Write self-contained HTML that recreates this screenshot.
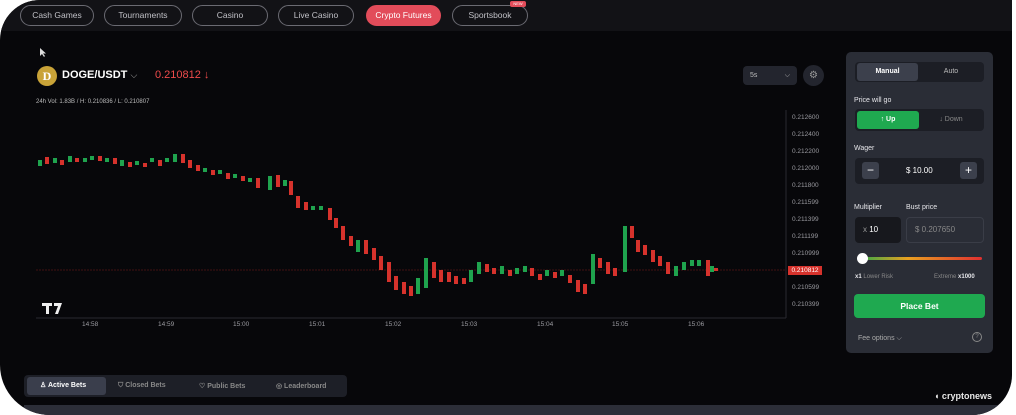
<!DOCTYPE html>
<html><head><meta charset="utf-8"><style>
*{margin:0;padding:0;box-sizing:border-box}
body{width:1016px;height:415px;background:#fff;overflow:hidden;font-family:"Liberation Sans",sans-serif;position:relative}
.frame{position:absolute;left:0;top:0;width:1012px;height:415px;background:#07070a;border-radius:40px 0 40px 50px;overflow:hidden}
.top{position:absolute;left:0;top:0;width:1016px;height:31px;background:#121216}
.tab{position:absolute;top:5px;height:21px;border:1px solid #6a6a72;border-radius:11px;color:#c0c0c6;font-size:8.5px;line-height:19px;text-align:center}
.panel{position:absolute;left:846px;top:52px;width:147px;height:301px;background:#2a2d36;border-radius:5px}
.t{position:absolute;color:#e6e6ea;font-size:7px}
.ax{position:absolute;left:792px;color:#9a9aa0;font-size:6.5px}
.tm{position:absolute;top:321px;color:#9a9aa0;font-size:6.5px}
</style></head><body>
<div class="frame">
<div class="top"></div>
<div class="tab" style="left:20px;width:74px">Cash Games</div>
<div class="tab" style="left:104px;width:78px">Tournaments</div>
<div class="tab" style="left:192px;width:76px">Casino</div>
<div class="tab" style="left:278px;width:76px">Live Casino</div>
<div class="tab" style="left:366px;width:75px;background:#e24c5a;border-color:#e24c5a;color:#fff">Crypto Futures</div>
<div class="tab" style="left:452px;width:76px">Sportsbook</div>
<div style="position:absolute;left:510px;top:1px;width:16px;height:6px;background:#e24c5a;border-radius:2px;color:#fff;font-size:4px;text-align:center;line-height:6px">NEW</div>
<svg style="position:absolute;left:40px;top:48px" width="8" height="10"><path d="M0 0v8l2-2 2 3 1-1-2-2.5h3z" fill="#ddd"/></svg>
<div style="position:absolute;left:37px;top:66px;width:20px;height:20px;border-radius:50%;background:#c9a338;color:#fff;font:bold 12px 'Liberation Serif',serif;text-align:center;line-height:20px">D</div>
<div style="position:absolute;left:62px;top:69px;color:#fff;font-size:11px;font-weight:bold">DOGE/USDT <span style="font-weight:normal;color:#aaa;font-size:9px">⌵</span></div>
<div style="position:absolute;left:155px;top:69px;color:#ef4b4b;font-size:11px">0.210812 ↓</div>
<div style="position:absolute;left:36px;top:99px;color:#bbb;font-size:6px">24h Vol: 1.83B / H: 0.210836 / L: 0.210807</div>
<div style="position:absolute;left:743px;top:66px;width:54px;height:19px;background:#23252e;border-radius:4px;color:#bbb;font-size:7px;line-height:19px;padding-left:7px">5s<span style="position:absolute;right:7px">⌵</span></div>
<div style="position:absolute;left:803px;top:65px;width:21px;height:21px;background:#23252e;border-radius:50%;color:#999;font-size:10px;text-align:center;line-height:21px">⚙</div>
<svg style="position:absolute;left:0;top:0" width="1016" height="415">
<line x1="786" y1="110" x2="786" y2="318" stroke="#2a2a30"/>
<line x1="36" y1="318" x2="786" y2="318" stroke="#2a2a30"/>
<line x1="36" y1="270" x2="786" y2="270" stroke="#7a1a1a" stroke-dasharray="2 1" stroke-width=".6"/>
<path stroke="#d6322c" stroke-width="4" fill="none" d="M47 157v7 M62 160v5 M77 158v4 M100 156v5 M115 158v6 M130 162v5 M145 163v4 M160 160v6 M183 154v9 M190 160v8 M198 165v6 M213 170v5 M228 173v6 M243 176v5 M258 178v10 M278 175v12 M291 181v14 M298 196v12 M306 202v8 M330 208v12 M336 218v10 M343 226v14 M351 236v10 M366 240v14 M374 248v12 M381 256v14 M389 262v20 M396 276v14 M404 282v12 M411 286v10 M434 262v16 M441 270v12 M449 272v10 M456 276v8 M464 278v6 M487 264v8 M494 268v6 M510 270v6 M532 268v8 M540 274v6 M555 272v6 M570 275v8 M578 280v12 M585 284v10 M600 258v10 M608 262v12 M615 268v8 M632 226v12 M638 240v12 M645 245v10 M653 250v12 M660 256v10 M668 262v12 M708 260v16 M716 268v3"/>
<path stroke="#1fa34e" stroke-width="4" fill="none" d="M40 160v6 M55 158v5 M70 156v6 M85 158v4 M92 156v4 M107 158v4 M122 160v6 M137 161v4 M152 158v4 M167 158v4 M175 154v8 M205 168v4 M220 170v4 M235 174v4 M250 178v4 M270 176v14 M285 180v6 M313 206v4 M321 206v4 M358 240v12 M418 278v16 M426 258v30 M471 270v12 M479 262v12 M502 266v8 M517 268v6 M525 266v6 M547 270v6 M562 270v6 M593 254v30 M625 226v46 M676 266v10 M684 262v8 M692 260v6 M699 260v6 M712 266v6"/>
<path d="M42 303h10v3h-3v8h-3v-8h-4zM54 303h8l-4 11h-3l3-8h-4z" fill="#eee"/>
</svg>
<div class="ax" style="top:114px">0.212600</div><div class="ax" style="top:131px">0.212400</div><div class="ax" style="top:148px">0.212200</div><div class="ax" style="top:165px">0.212000</div><div class="ax" style="top:182px">0.211800</div><div class="ax" style="top:199px">0.211599</div><div class="ax" style="top:216px">0.211399</div><div class="ax" style="top:233px">0.211199</div><div class="ax" style="top:250px">0.210999</div>
<div style="position:absolute;left:788px;top:266px;width:34px;height:9px;background:#d6322c;color:#fff;font-size:6.5px;line-height:9px;text-align:center">0.210812</div>
<div class="ax" style="top:284px">0.210599</div><div class="ax" style="top:301px">0.210399</div>
<div class="tm" style="left:82px">14:58</div><div class="tm" style="left:158px">14:59</div><div class="tm" style="left:233px">15:00</div><div class="tm" style="left:309px">15:01</div><div class="tm" style="left:385px">15:02</div><div class="tm" style="left:461px">15:03</div><div class="tm" style="left:537px">15:04</div><div class="tm" style="left:612px">15:05</div><div class="tm" style="left:688px">15:06</div>
<div class="panel"></div>
<div style="position:absolute;left:855px;top:62px;width:129px;height:20px;background:#1c1e25;border-radius:4px"></div>
<div style="position:absolute;left:857px;top:63px;width:61px;height:18px;background:#3c404c;border-radius:3px;color:#fff;font-size:7px;font-weight:bold;text-align:center;line-height:18px">Manual</div>
<div style="position:absolute;left:920px;top:63px;width:62px;height:18px;color:#bbb;font-size:7px;text-align:center;line-height:18px">Auto</div>
<div class="t" style="left:854px;top:97px">Price will go</div>
<div style="position:absolute;left:855px;top:109px;width:129px;height:22px;background:#1c1e25;border-radius:4px"></div>
<div style="position:absolute;left:857px;top:111px;width:62px;height:18px;background:#1fa950;border-radius:3px;color:#fff;font-size:7px;font-weight:bold;text-align:center;line-height:18px">↑ Up</div>
<div style="position:absolute;left:920px;top:111px;width:62px;height:18px;color:#888;font-size:7px;text-align:center;line-height:18px">↓ Down</div>
<div class="t" style="left:854px;top:145px">Wager</div>
<div style="position:absolute;left:855px;top:158px;width:129px;height:26px;background:#1c1e25;border-radius:4px"></div>
<div style="position:absolute;left:862px;top:162px;width:17px;height:17px;background:#3c404c;border-radius:3px;color:#fff;font-size:12px;text-align:center;line-height:17px">−</div>
<div style="position:absolute;left:960px;top:162px;width:17px;height:17px;background:#3c404c;border-radius:3px;color:#fff;font-size:12px;text-align:center;line-height:17px">+</div>
<div class="t" style="left:906px;top:166px;font-size:8px;color:#fff">$ 10.00</div>
<div class="t" style="left:854px;top:204px">Multiplier</div>
<div class="t" style="left:906px;top:204px">Bust price</div>
<div style="position:absolute;left:855px;top:217px;width:46px;height:26px;background:#17181d;border-radius:4px;color:#fff;font-size:8px;line-height:26px;padding-left:8px"><span style="color:#999">x</span> 10</div>
<div style="position:absolute;left:906px;top:217px;width:78px;height:26px;border:1px solid #3a3d47;border-radius:4px;color:#888;font-size:8px;line-height:24px;padding-left:8px">$ 0.207650</div>
<div style="position:absolute;left:858px;top:257px;width:124px;height:3px;border-radius:2px;background:linear-gradient(90deg,#2eaa4a,#e8a020 40%,#e03030)"></div>
<div style="position:absolute;left:857px;top:253px;width:11px;height:11px;border-radius:50%;background:#fff"></div>
<div class="t" style="left:855px;top:274px;font-size:6px"><b>x1</b> <span style="color:#888">Lower Risk</span></div>
<div class="t" style="left:934px;top:274px;font-size:6px"><span style="color:#888">Extreme</span> <b>x1000</b></div>
<div style="position:absolute;left:854px;top:294px;width:131px;height:24px;background:#1fa950;border-radius:4px;color:#fff;font-size:8.5px;font-weight:bold;text-align:center;line-height:24px">Place Bet</div>
<div class="t" style="left:858px;top:335px;color:#aaa">Fee options ⌵</div>
<div style="position:absolute;left:972px;top:332px;width:10px;height:10px;border:1px solid #888;border-radius:50%;color:#888;font-size:6px;text-align:center;line-height:8px">?</div>
<div style="position:absolute;left:24px;top:375px;width:323px;height:22px;background:#1d1f27;border-radius:4px"></div>
<div style="position:absolute;left:27px;top:377px;width:79px;height:18px;background:#3a3e4c;border-radius:3px;color:#fff;font-size:7px;font-weight:bold;line-height:18px;padding-left:13px">♙ Active Bets</div>
<div class="t" style="left:118px;top:382px;color:#888;font-weight:bold">⛉ Closed Bets</div>
<div class="t" style="left:199px;top:382px;color:#888;font-weight:bold">♡ Public Bets</div>
<div class="t" style="left:276px;top:382px;color:#888;font-weight:bold">◎ Leaderboard</div>
<div style="position:absolute;left:24px;top:405px;width:1000px;height:10px;background:#2c2e38"></div>
<div style="position:absolute;left:934px;top:391px;color:#e8e8e8;font-size:9px;font-weight:bold">◖ cryptonews</div>
</div>
</body></html>
